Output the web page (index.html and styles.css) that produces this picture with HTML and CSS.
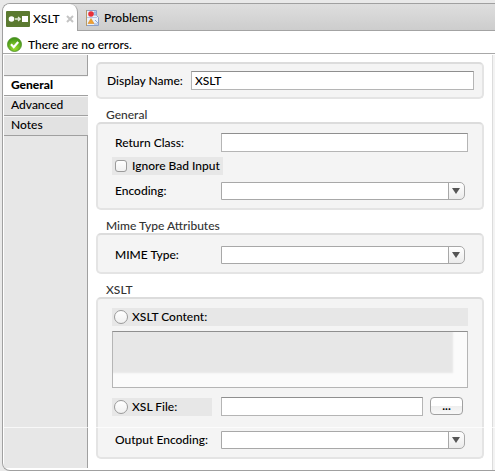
FILE: index.html
```html
<!DOCTYPE html>
<html lang="en">
<head>
<meta charset="utf-8">
<title>XSLT</title>
<link rel="stylesheet" href="styles.css">
</head>
<body>
<main class="window">
  <nav class="tabs">
    <a class="tab tab-active" href="#xslt">
      <svg class="logo" width="24" height="16" viewBox="0 0 24 16">
        <rect width="24" height="16" rx="1" fill="#5b7a30"/>
        <circle cx="5.500" cy="8" r="2.800" fill="#fff"/>
        <path d="M9 8h5M12 6l2.300 2-2.300 2" fill="none" stroke="#e4ead9" stroke-width="1.300"/>
        <rect x="16" y="5" width="6" height="6" fill="#fff"/>
      </svg>
      <span>XSLT</span>
      <svg class="close" width="8" height="8" viewBox="0 0 8 8"><path d="M1 1l6 6M7 1L1 7" stroke="#c4c4c4" stroke-width="2"/></svg>
    </a>
    <a class="tab" href="#problems">
      <svg class="problems" width="15" height="16" viewBox="0 0 15 16">
        <path d="M1.500 .5h10v5l2 2v8h-12z" fill="#eaf1fb" stroke="#8b9fc8"/>
        <path d="M1.500 0v16" stroke="#b49a6a"/>
        <path d="M9 2h2v3H9zM10 10l3 3M9 14h4" fill="#cfdcf2" stroke="#8ea9d8"/>
        <circle cx="6" cy="4" r="2.800" fill="#e8303a"/>
        <path d="M6 8.500l3 5H3z" fill="#f0a030" stroke="#d98a25" stroke-width=".6"/>
        <path d="M2 7.500h10" stroke="#b6c5e2"/>
      </svg>
      <span>Problems</span>
    </a>
  </nav>
  <div class="status">
    <svg width="15" height="15" viewBox="0 0 15 15">
      <defs><radialGradient id="ok" cx=".5" cy=".75" r=".7"><stop offset="0" stop-color="#9ade2c"/><stop offset="1" stop-color="#429318"/></radialGradient></defs>
      <circle cx="7.500" cy="7.500" r="7" fill="url(#ok)" stroke="#4b8e24" stroke-width=".8"/>
      <path d="M4 7.300l2.700 2.900L11.200 5" fill="none" stroke="#fff" stroke-width="2.200"/>
    </svg>
    <span>There are no errors.</span>
  </div>
  <div class="body">
    <nav class="side">
      <a class="side-item side-active" href="#general">General</a>
      <a class="side-item" href="#advanced">Advanced</a>
      <a class="side-item" href="#notes">Notes</a>
      <div class="side-rest"></div>
    </nav>
    <form class="form">
      <div class="group group-name">
        <label for="name">Display Name:</label>
        <input class="text" id="name" type="text" value="XSLT">
      </div>

      <h2 class="title">General</h2>
      <div class="group group-general">
        <div class="row">
          <label class="label" for="return">Return Class:</label>
          <input class="text" id="return" type="text">
        </div>
        <label class="choice"><input class="check" type="checkbox">Ignore Bad Input</label>
        <div class="row">
          <label class="label" for="encoding">Encoding:</label>
          <span class="combo"><select id="encoding"><option></option></select><svg width="8" height="6" viewBox="0 0 8 6"><path d="M0 0h8L4 6z" fill="#555"/></svg></span>
        </div>
      </div>

      <h2 class="title">Mime Type Attributes</h2>
      <div class="group group-mime">
        <div class="row">
          <label class="label" for="mime">MIME Type:</label>
          <span class="combo"><select id="mime"><option></option></select><svg width="8" height="6" viewBox="0 0 8 6"><path d="M0 0h8L4 6z" fill="#555"/></svg></span>
        </div>
      </div>

      <h2 class="title">XSLT</h2>
      <div class="group group-xslt">
        <label class="choice choice-wide"><input class="radio" type="radio" name="source">XSLT Content:</label>
        <textarea class="content" aria-label="XSLT Content"></textarea>
        <div class="row row-file">
          <label class="choice choice-file"><input class="radio" type="radio" name="source">XSL File:</label>
          <input class="text" type="text" aria-label="XSL File path">
          <button class="browse" type="button">...</button>
        </div>
        <div class="row">
          <label class="label" for="output">Output Encoding:</label>
          <span class="combo"><select id="output"><option></option></select><svg width="8" height="6" viewBox="0 0 8 6"><path d="M0 0h8L4 6z" fill="#555"/></svg></span>
        </div>
      </div>
    </form>
    <div class="edge"></div>
    <div class="seam"></div>
  </div>
</main>
</body>
</html>
```
FILE: styles.css
```css
* { box-sizing: border-box; }

body {
  margin: 0;
  padding: 3px 0 0 2px;
  min-height: 100vh;
  display: flex;
  background: #e9e9e9;
  color: #000;
  font: 500 12px/18px Lato, "Open Sans", sans-serif;
}

a { color: inherit; text-decoration: none; }
input, select, textarea, button { font: inherit; color: inherit; margin: 0; }

.window {
  flex: 1;
  min-width: 0;
  display: flex;
  flex-direction: column;
  background: #fff;
  border: solid #a0a0a0;
  border-width: 1px 0 1px 1px;
  border-radius: 8px 0 0 8px;
  overflow: hidden;
}

.tabs {
  display: flex;
  height: 27px;
  background: linear-gradient(#dedede, #cdcdcd);
  border-bottom: 1px solid #a3a3a3;
}

.tab {
  display: flex;
  align-items: center;
  gap: 4px;
  padding-left: 7px;
  padding-top: 2px;
}

.tab-active {
  gap: 3px;
  width: 75px;
  height: 27px;
  padding-left: 3px;
  background: #fff;
  border-right: 1px solid #a3a3a3;
  border-radius: 0 8px 0 0;
}

.logo, .problems { flex: none; }
.close { flex: none; margin-left: 3px; }

.status {
  display: flex;
  align-items: center;
  gap: 6px;
  height: 23px;
  padding: 5px 0 0 4px;
  border-bottom: 1px solid #a8a8a8;
}

.body {
  flex: 1;
  display: flex;
  position: relative;
  padding: 1px 0 0 1px;
}

.side {
  flex: none;
  width: 84px;
  display: flex;
  flex-direction: column;
  padding-bottom: 2px;
}

.side::before {
  content: "";
  height: 20px;
  background: #e7e7e7;
  border: solid #a0a0a0;
  border-width: 0 1px 1px 0;
}

.side-item {
  height: 20px;
  padding-left: 7px;
  background: #e2e2e2;
  border-bottom: 1px solid #a0a0a0;
  box-shadow: inset 0 1px #f5f5f5;
}

.side-active { background: #fff; font-weight: 900; }

.side-rest {
  flex: 1;
  background: #e7e7e7;
  border-right: 1px solid #a0a0a0;
}

.form { flex: 1; min-width: 0; padding: 7px 8px 10px; }

.group {
  background: #f4f4f4;
  border: 2px solid #e4e4e4;
  border-top-color: #dcdcdc;
  border-radius: 5px;
  padding: 0 14px;
}

.group-name {
  display: flex;
  align-items: center;
  gap: 8px;
  height: 37px;
  padding: 0 8px 0 9px;
}

.title {
  margin: 0;
  padding: 7px 0 0 10px;
  height: 23px;
  font-size: 12px;
  font-weight: 500;
  line-height: 18px;
  color: #333;
}

.group-general { height: 88px; padding-top: 9px; }
.group-mime { height: 41px; padding-top: 11px; }
.group-xslt { height: 162px; padding-top: 9px; }

.row { display: flex; align-items: center; }
.label { flex: none; width: 109px; padding-left: 3px; }

.text {
  flex: 1;
  min-width: 0;
  height: 19px;
  padding: 0 3px;
  background: #fff;
  border: 1px solid #b5b5b5;
  border-top-color: #8f8f8f;
  outline: 0;
}

.choice {
  display: flex;
  align-items: center;
  gap: 5px;
  width: 111px;
  height: 18px;
  margin: 5px 0 7px;
  padding-left: 3px;
  background: #e7e7e7;
  white-space: nowrap;
}

.check, .radio {
  appearance: none;
  flex: none;
  width: 12px;
  height: 12px;
  background: linear-gradient(#fff, #f0f0f0);
  border: 1px solid #9a9a9a;
  border-radius: 3px;
}

.radio { width: 14px; height: 14px; border-radius: 50%; }

.choice-wide { width: auto; margin: 0 0 5px; padding-left: 2px; gap: 4px; }
.choice-file { flex: none; width: 100px; margin: 0 9px 0 0; padding-left: 2px; gap: 4px; }

.combo {
  flex: 1;
  position: relative;
  display: flex;
  margin-right: 3px;
}

.combo select {
  appearance: none;
  width: 100%;
  height: 18px;
  background: linear-gradient(90deg, #a8a8a8 1px, transparent 1px) right / 16px 100% no-repeat, linear-gradient(#fff, #ebebeb) right / 16px 100% no-repeat, #fff;
  border: 1px solid #a8a8a8;
  border-radius: 0 5px 5px 0;
}

.combo svg {
  position: absolute;
  right: 5px;
  top: 6px;
  pointer-events: none;
}

.content {
  display: block;
  width: 100%;
  height: 57px;
  padding: 0;
  resize: none;
  outline: 0;
  background: #e7e7e7;
  border: 1px solid #b5b5b5;
  border-top-color: #8f8f8f;
  box-shadow: inset -14px -14px 2px #fbfbfb;
}

.row-file { margin: 9px 0 15px; }

.browse {
  flex: none;
  width: 33px;
  height: 18px;
  margin: 0 5px 1px 7px;
  padding: 0;
  line-height: 16px;
  font-weight: 700;
  background: linear-gradient(#fff 50%, #eee 50%, #f8f8f8);
  border: 1px solid #a0a0a0;
  border-radius: 4px;
}

.edge {
  flex: none;
  width: 3px;
  background: #f3f3f3;
  border-left: 1px solid #dcdcdc;
}

.seam {
  position: absolute;
  left: 0;
  right: 0;
  bottom: 42px;
  height: 1px;
  background: #fff;
  opacity: 0.7;
  pointer-events: none;
}
```
